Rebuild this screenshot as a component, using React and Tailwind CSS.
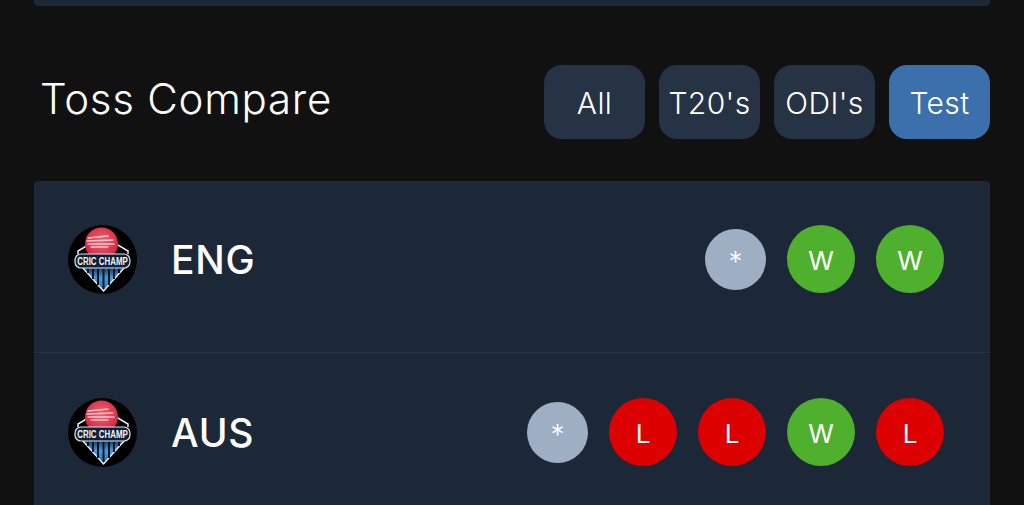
const font = { fontFamily: "Inter, 'Noto Sans', sans-serif" };

function Logo() {
  return (
    <svg width="69" height="69" viewBox="0 0 69 69" className="shrink-0">
      <defs>
        <radialGradient id="ball" cx="0.5" cy="0.4" r="0.65">
          <stop offset="0" stopColor="#ec6675" />
          <stop offset="0.7" stopColor="#dd3049" />
          <stop offset="1" stopColor="#a81c2c" />
        </radialGradient>
        <linearGradient id="shield" x1="0" y1="0" x2="0" y2="1">
          <stop offset="0" stopColor="#16304f" />
          <stop offset="0.45" stopColor="#4a9ad8" />
          <stop offset="1" stopColor="#2a6fb0" />
        </linearGradient>
      </defs>
      <circle cx="34.5" cy="34.5" r="34.5" fill="#000" />
      {/* frame behind the ball */}
      <path d="M10 29 L10 26 L20 20 L50 20 L60 26 L60 29" fill="none" stroke="#e8edf2" strokeWidth="1.5" />
      {/* shield */}
      <path d="M14 42 L57 42 L35.500 66 Z" fill="url(#shield)" stroke="#e8edf2" strokeWidth="1.4" strokeLinejoin="round" />
      <g stroke="#0a1626" strokeWidth="2">
        <path d="M20 43 L20 48" />
        <path d="M25 43 L25 54" />
        <path d="M30 43 L30 60" />
        <path d="M35.500 43 L35.500 64" />
        <path d="M41 43 L41 60" />
        <path d="M46 43 L46 54" />
        <path d="M51 43 L51 48" />
      </g>
      {/* ball */}
      <circle cx="33.500" cy="19" r="16.500" fill="url(#ball)" />
      <g stroke="#f7c9ce" strokeWidth="1.3" strokeLinecap="round">
        <path d="M20 13 L40 11" />
        <path d="M19 16 L45 15" />
        <path d="M20 19 L46 19" />
        <path d="M23 22 L40 22" />
      </g>
      {/* banner */}
      <rect x="7" y="29" width="55" height="14" rx="6" fill="#0f2136" stroke="#dfe6ee" strokeWidth="1.2" />
      <text
        transform="translate(34.5 40) scale(0.72 1)"
        textAnchor="middle"
        fontSize="11"
        fontWeight="700"
        fill="#f2f5f8"
        fontFamily="'Liberation Sans', sans-serif"
      >
        CRIC CHAMP
      </text>
    </svg>
  );
}

function Badge({ r }) {
  if (r === "*") {
    return (
      <div className="flex h-[61px] w-[61px] items-center justify-center rounded-full bg-[#9fafc3] pt-[6px] text-[28px] font-light text-white">
        *
      </div>
    );
  }
  return (
    <div
      className={`flex h-[68px] w-[68px] items-center justify-center rounded-full pt-[2px] text-[26px] text-white ${
        r === "W" ? "bg-[#4fb02e]" : "bg-[#dc0000]"
      }`}
    >
      {r}
    </div>
  );
}

function TeamRow({ name, results, className }) {
  return (
    <div className={`flex h-[172px] items-start justify-between pl-[34px] pr-[46px] ${className}`}>
      <div className="flex items-center gap-[34px]">
        <Logo />
        <span className="text-[39px] font-medium leading-none tracking-[0.8px] text-white">{name}</span>
      </div>
      <div className="flex h-[68px] items-center gap-[21px]">
        {results.map((r, i) => (
          <Badge key={i} r={r} />
        ))}
      </div>
    </div>
  );
}

export default function App() {
  const tabs = ["All", "T20's", "ODI's", "Test"];

  return (
    <div className="h-[505px] overflow-hidden bg-[#111111] px-[34px]" style={font}>
      {/* bottom of previous card */}
      <div className="h-[6px] rounded-b bg-[#1c2838]" />

      {/* Header */}
      <div className="mt-[59px] flex h-[74px] items-center justify-between">
        <h2 className="pb-[6px] pl-[6px] text-[42px] font-light leading-none tracking-[0.75px] text-white">Toss Compare</h2>
        <div className="flex gap-[14px]">
          {tabs.map((t) => (
            <button
              key={t}
              className={`h-[74px] w-[101px] rounded-[18px] pt-[3px] text-[30px] font-light tracking-[0.4px] text-white ${
                t === "Test" ? "bg-[#3c70ad]" : "bg-[#263345]"
              }`}
            >
              {t}
            </button>
          ))}
        </div>
      </div>

      {/* Toss table */}
      <div className="mt-[42px] rounded-t bg-[#1c2838]">
        <TeamRow name="ENG" results={["*", "W", "W"]} className="border-b border-[#263345] pt-[44px]" />
        <TeamRow name="AUS" results={["*", "L", "L", "W", "L"]} className="pt-[45px]" />
      </div>
    </div>
  );
}
